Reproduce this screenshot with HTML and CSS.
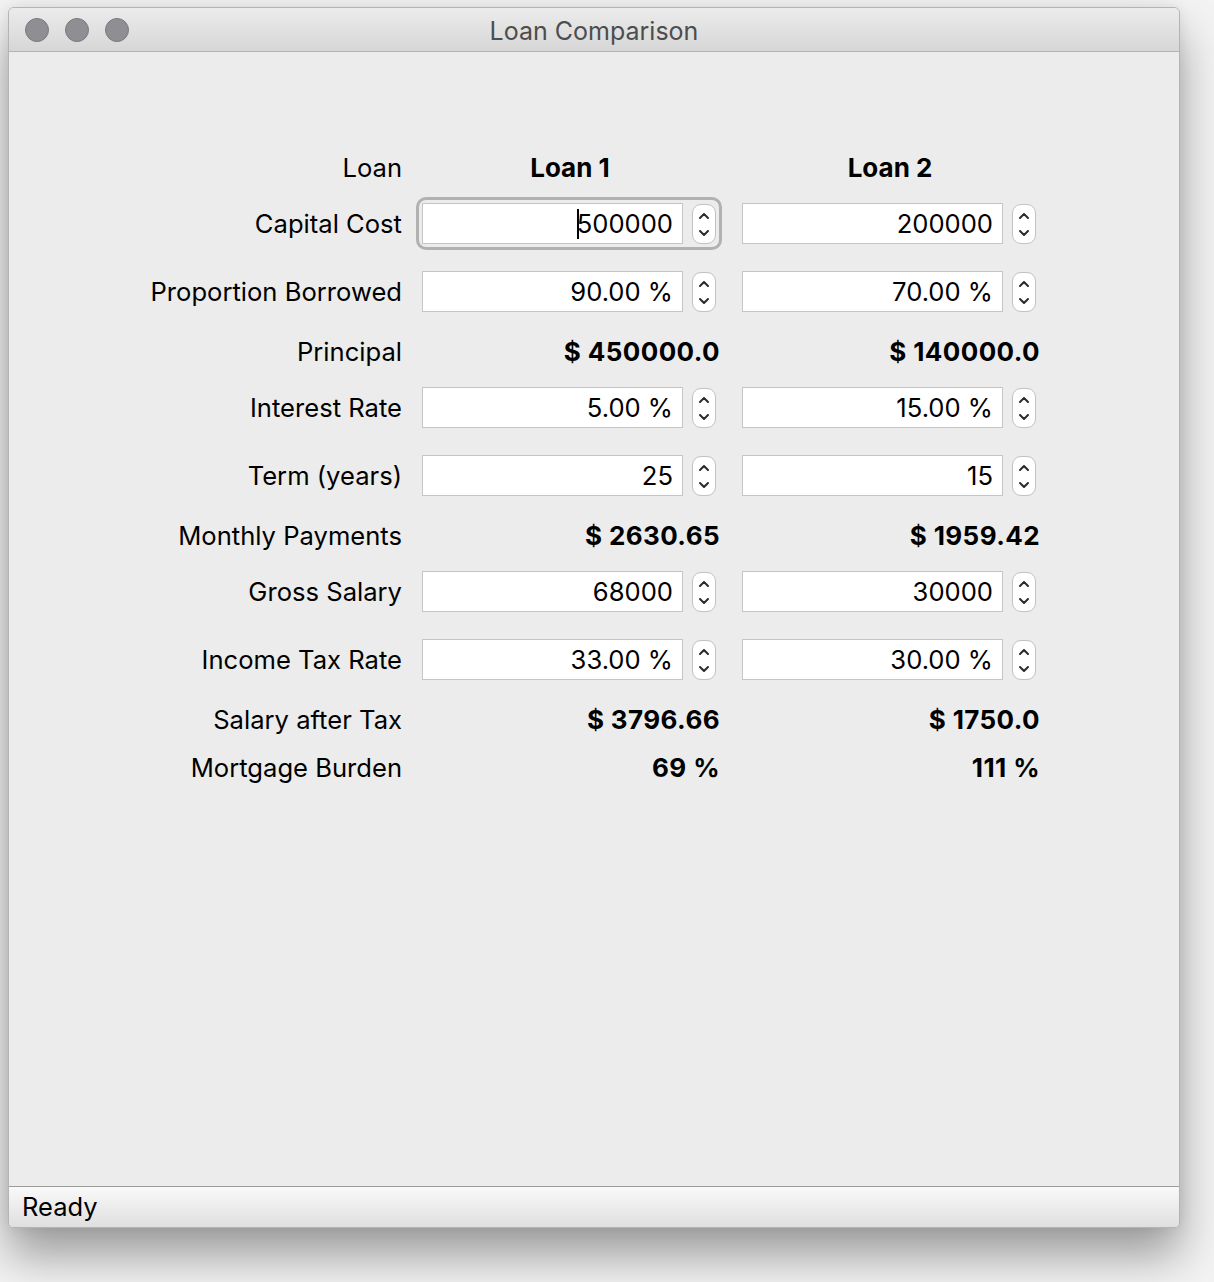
FILE: index.html
```html
<!DOCTYPE html>
<html lang="en">
<head>
<meta charset="utf-8">
<title>Loan Comparison</title>
<link rel="stylesheet" href="styles.css">
</head>
<body>
<div class="window">
  <div class="titlebar">
    <div class="lights">
      <span class="light"></span>
      <span class="light"></span>
      <span class="light"></span>
    </div>
    <div class="title">Loan Comparison</div>
  </div>
  <div class="content">
    <div class="form">
      <div class="label row-l">Loan</div>
      <div class="head row-l">Loan 1</div>
      <div class="head row-l">Loan 2</div>

      <div class="label row-i">Capital Cost</div>
      <div class="cell row-i"><div class="spin focused"><div class="field"><span class="caret"></span>500000</div><div class="stepper"><svg viewBox="0 0 24 40" width="24" height="40"><path d="M8 14 L12 10 L16 14"/><path d="M8 27 L12 31 L16 27"/></svg></div></div></div>
      <div class="cell row-i"><div class="spin"><div class="field">200000</div><div class="stepper"><svg viewBox="0 0 24 40" width="24" height="40"><path d="M8 14 L12 10 L16 14"/><path d="M8 27 L12 31 L16 27"/></svg></div></div></div>

      <div class="label row-i">Proportion Borrowed</div>
      <div class="cell row-i"><div class="spin"><div class="field">90.00 %</div><div class="stepper"><svg viewBox="0 0 24 40" width="24" height="40"><path d="M8 14 L12 10 L16 14"/><path d="M8 27 L12 31 L16 27"/></svg></div></div></div>
      <div class="cell row-i"><div class="spin"><div class="field">70.00 %</div><div class="stepper"><svg viewBox="0 0 24 40" width="24" height="40"><path d="M8 14 L12 10 L16 14"/><path d="M8 27 L12 31 L16 27"/></svg></div></div></div>

      <div class="label row-l">Principal</div>
      <div class="value row-l">$ 450000.0</div>
      <div class="value row-l">$ 140000.0</div>

      <div class="label row-i">Interest Rate</div>
      <div class="cell row-i"><div class="spin"><div class="field">5.00 %</div><div class="stepper"><svg viewBox="0 0 24 40" width="24" height="40"><path d="M8 14 L12 10 L16 14"/><path d="M8 27 L12 31 L16 27"/></svg></div></div></div>
      <div class="cell row-i"><div class="spin"><div class="field">15.00 %</div><div class="stepper"><svg viewBox="0 0 24 40" width="24" height="40"><path d="M8 14 L12 10 L16 14"/><path d="M8 27 L12 31 L16 27"/></svg></div></div></div>

      <div class="label row-i">Term (years)</div>
      <div class="cell row-i"><div class="spin"><div class="field">25</div><div class="stepper"><svg viewBox="0 0 24 40" width="24" height="40"><path d="M8 14 L12 10 L16 14"/><path d="M8 27 L12 31 L16 27"/></svg></div></div></div>
      <div class="cell row-i"><div class="spin"><div class="field">15</div><div class="stepper"><svg viewBox="0 0 24 40" width="24" height="40"><path d="M8 14 L12 10 L16 14"/><path d="M8 27 L12 31 L16 27"/></svg></div></div></div>

      <div class="label row-l">Monthly Payments</div>
      <div class="value row-l">$ 2630.65</div>
      <div class="value row-l">$ 1959.42</div>

      <div class="label row-i">Gross Salary</div>
      <div class="cell row-i"><div class="spin"><div class="field">68000</div><div class="stepper"><svg viewBox="0 0 24 40" width="24" height="40"><path d="M8 14 L12 10 L16 14"/><path d="M8 27 L12 31 L16 27"/></svg></div></div></div>
      <div class="cell row-i"><div class="spin"><div class="field">30000</div><div class="stepper"><svg viewBox="0 0 24 40" width="24" height="40"><path d="M8 14 L12 10 L16 14"/><path d="M8 27 L12 31 L16 27"/></svg></div></div></div>

      <div class="label row-i">Income Tax Rate</div>
      <div class="cell row-i"><div class="spin"><div class="field">33.00 %</div><div class="stepper"><svg viewBox="0 0 24 40" width="24" height="40"><path d="M8 14 L12 10 L16 14"/><path d="M8 27 L12 31 L16 27"/></svg></div></div></div>
      <div class="cell row-i"><div class="spin"><div class="field">30.00 %</div><div class="stepper"><svg viewBox="0 0 24 40" width="24" height="40"><path d="M8 14 L12 10 L16 14"/><path d="M8 27 L12 31 L16 27"/></svg></div></div></div>

      <div class="label row-l">Salary after Tax</div>
      <div class="value row-l">$ 3796.66</div>
      <div class="value row-l">$ 1750.0</div>

      <div class="label row-l">Mortgage Burden</div>
      <div class="value row-l">69 %</div>
      <div class="value row-l">111 %</div>
    </div>
  </div>
  <div class="statusbar">Ready</div>
</div>
</body>
</html>
```
FILE: styles.css
```css
html, body {
  margin: 0;
  padding: 0;
}
body {
  background: #f3f3f3;
  font-family: "Inter", "Liberation Sans", sans-serif;
  font-size: 25.6px;
  color: #000;
  width: 1214px;
  height: 1282px;
  overflow: hidden;
}
.window {
  margin: 7px 0 0 8px;
  width: 1172px;
  height: 1221px;
  box-sizing: border-box;
  border: 1px solid #b4b4b4;
  border-radius: 6px 6px 5px 5px;
  background: #ececec;
  display: flex;
  flex-direction: column;
  overflow: hidden;
  box-shadow: 0 28px 46px rgba(0,0,0,0.36), 0 0 14px rgba(0,0,0,0.08);
}
.titlebar {
  height: 43px;
  flex: none;
  display: flex;
  align-items: center;
  background: linear-gradient(#ececec, #d6d6d6);
  border-bottom: 1px solid #b3b3b3;
}
.lights {
  display: flex;
  gap: 16px;
  padding-left: 16px;
  margin-top: 1px;
  width: 120px;
  box-sizing: border-box;
  flex: none;
}
.light {
  width: 22px;
  height: 22px;
  border-radius: 50%;
  background: #8f8e92;
  border: 1px solid #7a797d;
}
.title {
  flex: 1;
  text-align: center;
  color: #4d4d4d;
  font-size: 25px;
  margin-left: -120px;
  margin-top: 2px;
}
.content {
  flex: 1;
  padding: 100px 0 0 143px;
  background: #ececec;
}
.form {
  display: grid;
  grid-template-columns: 250px 300px 296px;
  column-gap: 20px;
  row-gap: 16px;
}
.row-l {
  height: 32px;
  line-height: 32px;
}
.row-i {
  height: 52px;
}
.label {
  text-align: right;
  white-space: nowrap;
  line-height: 32px;
}
.row-i.label {
  display: flex;
  align-items: center;
  justify-content: flex-end;
  height: 48px;
}
.head {
  width: 296px;
  text-align: center;
  font-weight: 700;
  font-size: 26px;
}
.value {
  width: 298px;
  text-align: right;
  font-weight: 700;
  font-size: 26px;
  letter-spacing: 0.4px;
  white-space: nowrap;
}
.cell {
  padding-top: 3px;
  box-sizing: border-box;
}
.spin {
  display: flex;
  align-items: flex-start;
  width: 294px;
  border-radius: 4px;
}
.spin.focused {
  outline: 3px solid #b1b1b1;
  outline-offset: 3px;
}
.field {
  width: 261px;
  height: 41px;
  box-sizing: border-box;
  background: #fff;
  border: 1px solid #c5c5c5;
  text-align: right;
  padding-right: 9px;
  line-height: 39px;
  white-space: nowrap;
}
.caret {
  display: inline-block;
  width: 2px;
  height: 30px;
  background: #000;
  vertical-align: middle;
  margin-right: -2px;
  position: relative;
  top: -2px;
}
.stepper {
  margin-left: 9px;
  margin-top: 1px;
  width: 24px;
  height: 40px;
  box-sizing: border-box;
  border: 1px solid #c2c2c2;
  border-radius: 9px;
  background: #fff;
  overflow: hidden;
}
.stepper svg {
  display: block;
  margin: -1px 0 0 -1px;
}
.stepper path {
  fill: none;
  stroke: #2b2b2b;
  stroke-width: 2;
  stroke-linecap: round;
  stroke-linejoin: round;
}
.statusbar {
  height: 41px;
  flex: none;
  box-sizing: border-box;
  border-top: 1px solid #9b9b9b;
  background: linear-gradient(#f9f9f9, #dfdfdf);
  padding-left: 13px;
  line-height: 40px;
  font-size: 25.5px;
}
```
